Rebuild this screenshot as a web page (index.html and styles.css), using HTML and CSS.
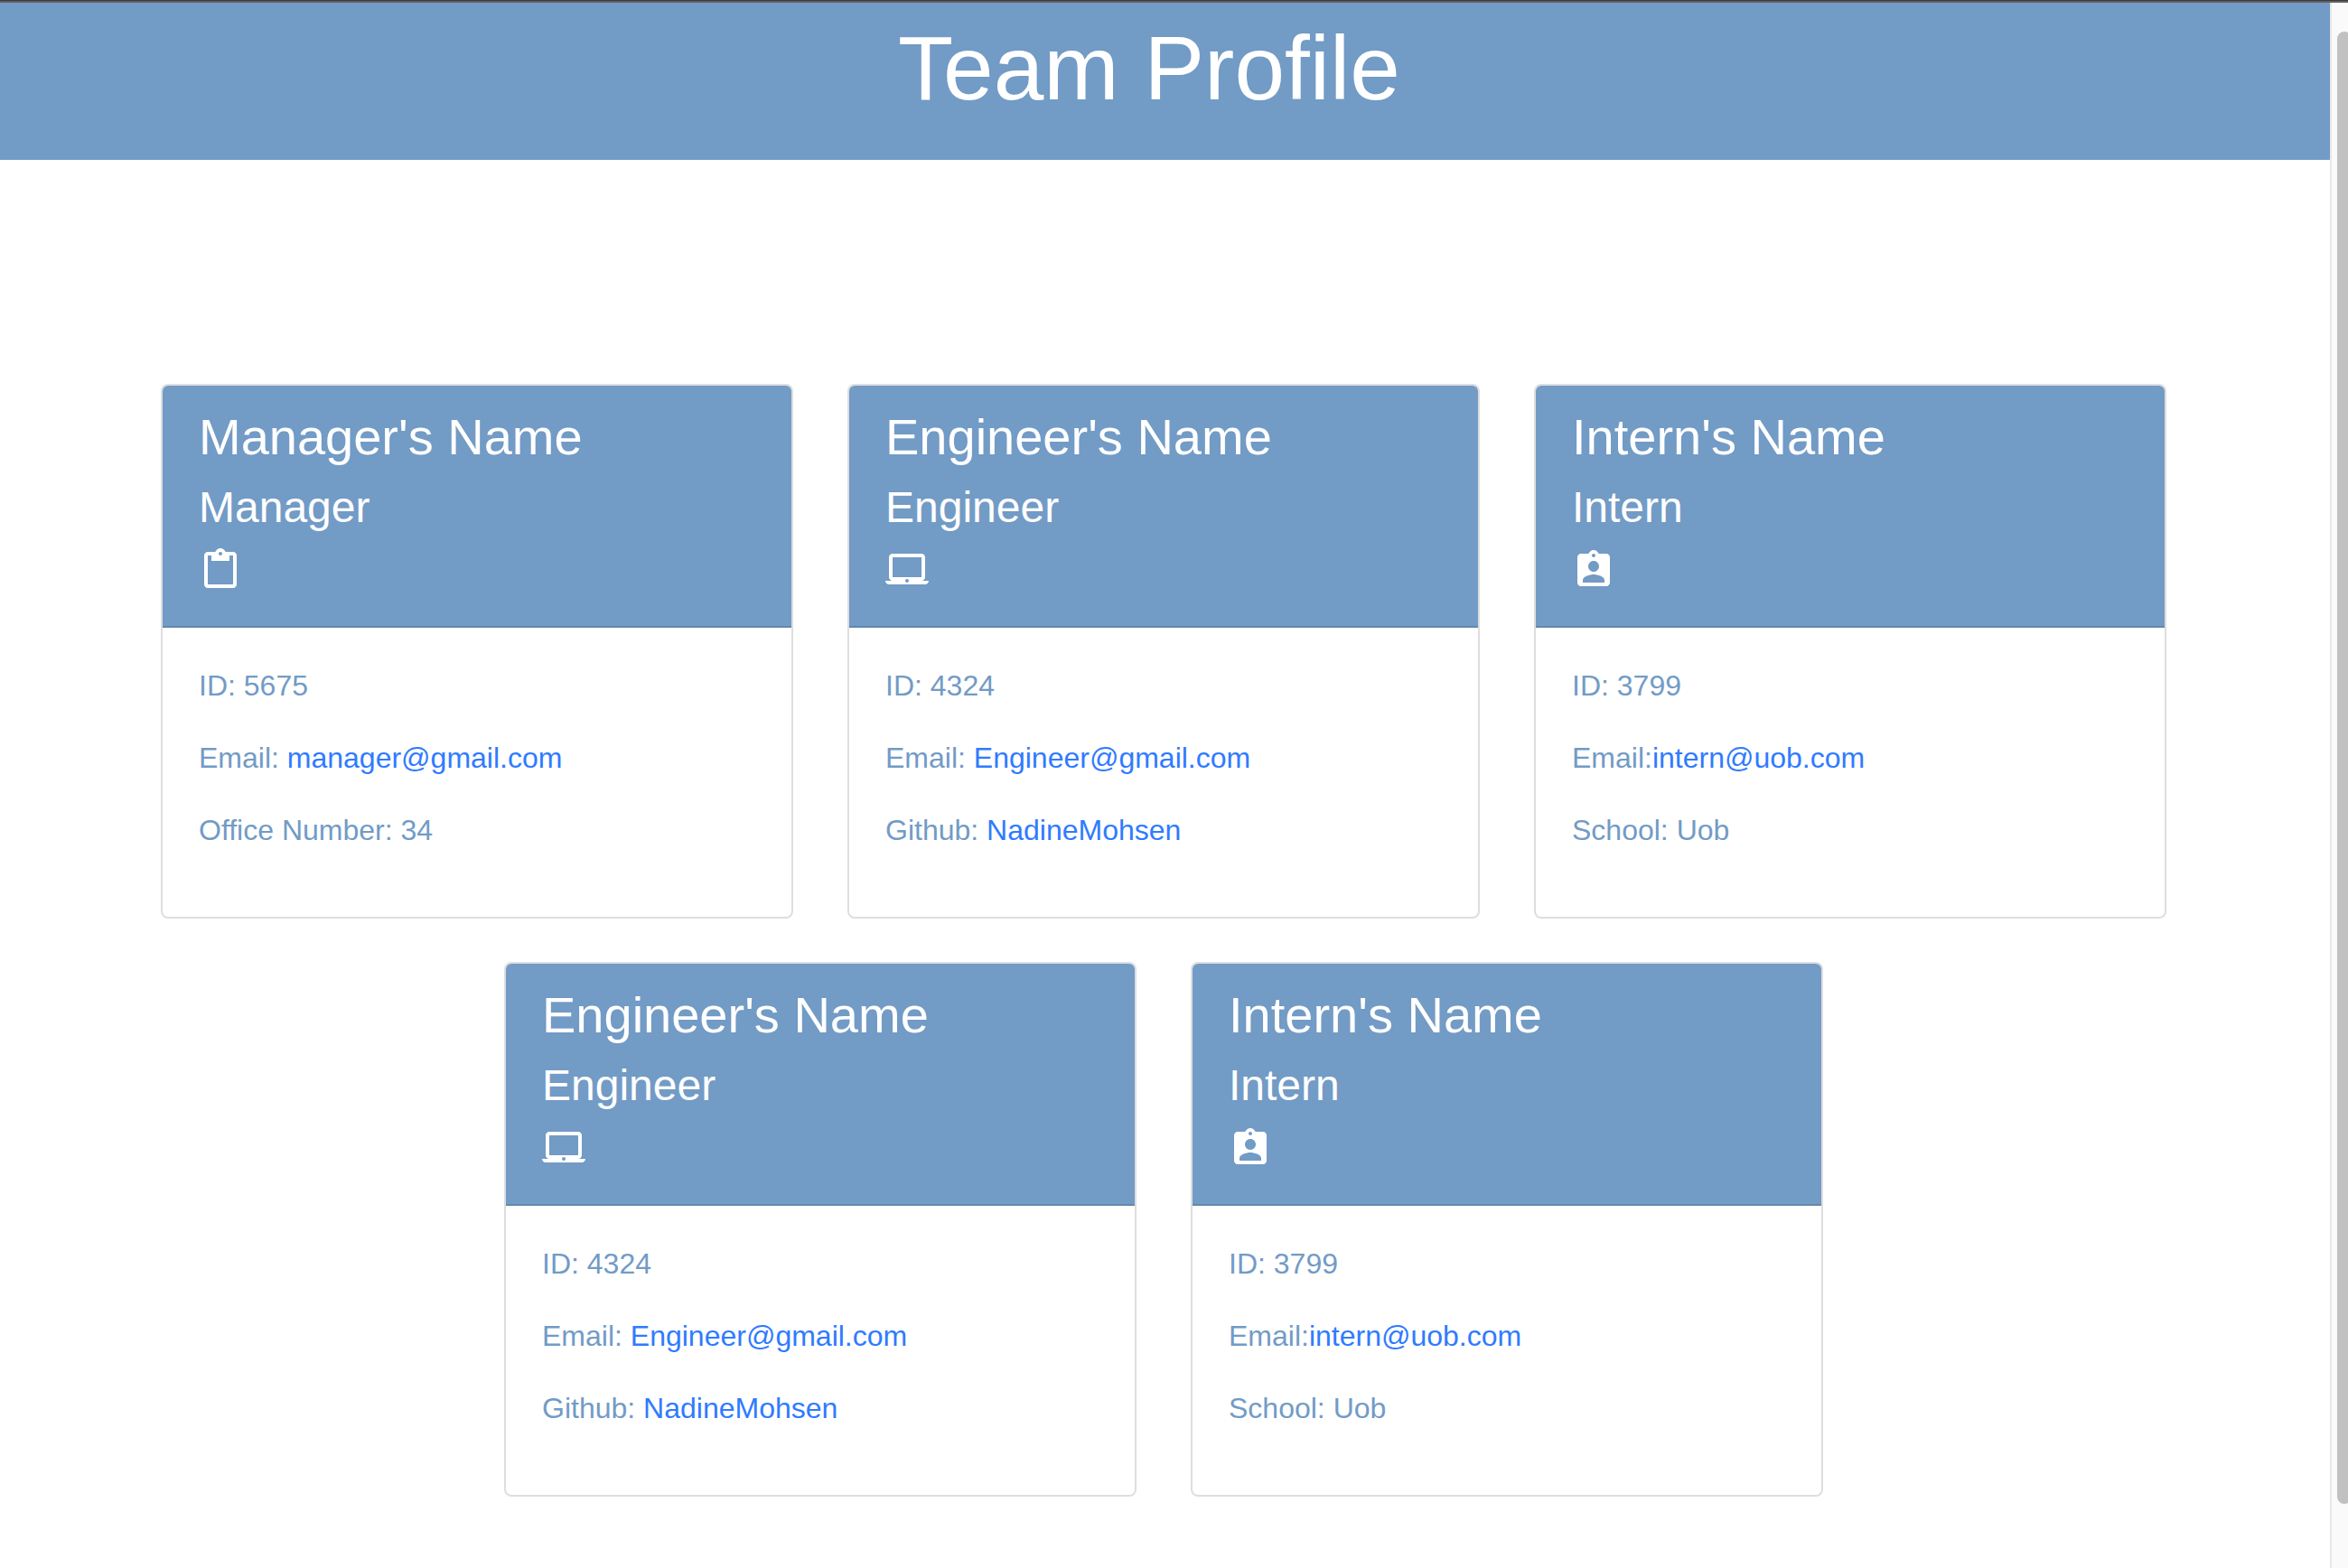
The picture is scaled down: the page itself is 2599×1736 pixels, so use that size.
FILE: index.html
```html
<!DOCTYPE html>
<html lang="en">
<head>
<meta charset="utf-8">
<meta name="viewport" content="width=device-width, initial-scale=1">
<title>Team Profile</title>
<link rel="stylesheet" href="styles.css">
</head>
<body>
<svg class="sprite" aria-hidden="true">
  <symbol id="icon-manager" viewBox="0 0 24 24"><path d="M19 2h-4.18C14.4.84 13.3 0 12 0c-1.3 0-2.4.84-2.82 2H5c-1.1 0-2 .9-2 2v16c0 1.1.9 2 2 2h14c1.1 0 2-.9 2-2V4c0-1.1-.9-2-2-2zm-7 0c.55 0 1 .45 1 1s-.45 1-1 1-1-.45-1-1 .45-1 1-1zm7 18H5V4h2v3h10V4h2v16z"/></symbol>
  <symbol id="icon-engineer" viewBox="0 0 24 24"><path d="M20 18c1.1 0 1.99-.9 1.99-2L22 5c0-1.1-.9-2-2-2H4c-1.1 0-2 .9-2 2v11c0 1.1.9 2 2 2H0c0 1.1.9 2 2 2h20c1.1 0 2-.9 2-2h-4zM4 5h16v11H4V5zm8 14c-.55 0-1-.45-1-1s.45-1 1-1 1 .45 1 1-.45 1-1 1z"/></symbol>
  <symbol id="icon-intern" viewBox="0 0 24 24"><path d="M19 3h-4.18C14.4 1.84 13.3 1 12 1c-1.3 0-2.4.84-2.82 2H5c-1.1 0-2 .9-2 2v14c0 1.1.9 2 2 2h14c1.1 0 2-.9 2-2V5c0-1.1-.9-2-2-2zm-7 0c.55 0 1 .45 1 1s-.45 1-1 1-1-.45-1-1 .45-1 1-1zm0 4c1.66 0 3 1.34 3 3s-1.34 3-3 3-3-1.34-3-3 1.34-3 3-3zm6 12H6v-1.4c0-2 4-3.1 6-3.1s6 1.1 6 3.1V19z"/></symbol>
</svg>
<div class="window">
  <div class="page">
    <header class="banner"><h1 class="banner-title">Team Profile</h1></header>
    <main class="team">
      <article class="card">
        <div class="card-header">
          <h2 class="name">Manager's Name</h2>
          <h3 class="role">Manager</h3>
          <svg class="icon" aria-hidden="true"><use href="#icon-manager"/></svg>
        </div>
        <div class="card-body">
          <p>ID: 5675</p>
          <p>Email: <a href="mailto:manager@gmail.com">manager@gmail.com</a></p>
          <p>Office Number: 34</p>
        </div>
      </article>
      <article class="card">
        <div class="card-header">
          <h2 class="name">Engineer's Name</h2>
          <h3 class="role">Engineer</h3>
          <svg class="icon" aria-hidden="true"><use href="#icon-engineer"/></svg>
        </div>
        <div class="card-body">
          <p>ID: 4324</p>
          <p>Email: <a href="mailto:Engineer@gmail.com">Engineer@gmail.com</a></p>
          <p>Github: <a href="https://github.com/NadineMohsen">NadineMohsen</a></p>
        </div>
      </article>
      <article class="card">
        <div class="card-header">
          <h2 class="name">Intern's Name</h2>
          <h3 class="role">Intern</h3>
          <svg class="icon" aria-hidden="true"><use href="#icon-intern"/></svg>
        </div>
        <div class="card-body">
          <p>ID: 3799</p>
          <p>Email:<a href="mailto:intern@uob.com">intern@uob.com</a></p>
          <p>School: Uob</p>
        </div>
      </article>
      <article class="card">
        <div class="card-header">
          <h2 class="name">Engineer's Name</h2>
          <h3 class="role">Engineer</h3>
          <svg class="icon" aria-hidden="true"><use href="#icon-engineer"/></svg>
        </div>
        <div class="card-body">
          <p>ID: 4324</p>
          <p>Email: <a href="mailto:Engineer@gmail.com">Engineer@gmail.com</a></p>
          <p>Github: <a href="https://github.com/NadineMohsen">NadineMohsen</a></p>
        </div>
      </article>
      <article class="card">
        <div class="card-header">
          <h2 class="name">Intern's Name</h2>
          <h3 class="role">Intern</h3>
          <svg class="icon" aria-hidden="true"><use href="#icon-intern"/></svg>
        </div>
        <div class="card-body">
          <p>ID: 3799</p>
          <p>Email:<a href="mailto:intern@uob.com">intern@uob.com</a></p>
          <p>School: Uob</p>
        </div>
      </article>
    </main>
  </div>
  <div class="scroll-track" aria-hidden="true"><div class="scroll-thumb"></div></div>
</div>
</body>
</html>
```
FILE: styles.css
```css
*,
*::before {
  box-sizing: border-box;
}

body,
h1,
h2,
h3,
p {
  margin: 0;
  font-weight: 400;
}

body {
  display: flex;
  flex-direction: column;
  min-height: 100vh;
  background: #fff;
  color: #729bc6;
  font: 32px/48px "Liberation Sans", Arial, sans-serif;
}

/* Window edge above the page */
body::before {
  content: "";
  height: 3px;
  border-top: 1px solid #3b3a3c;
  background: #656162;
}

.sprite {
  display: none;
}

.window {
  flex: 1;
  display: flex;
}

.page {
  flex: 1;
}

.banner {
  padding: 12px 35px 42px 0;
  background: #729bc6;
  color: #fff;
  text-align: center;
}

.banner-title {
  font-size: 100px;
  line-height: 120px;
}

.team {
  display: flex;
  flex-wrap: wrap;
  justify-content: center;
  gap: 48px 60px;
  padding: 248px 3px 48px 0;
}

.card {
  width: 700px;
  border: 2px solid #dedede;
  border-radius: 8px;
  overflow: hidden;
}

.card-header {
  display: flex;
  flex-direction: column;
  gap: 16px;
  padding: 23px 40px 38px;
  border-bottom: 2px solid #6388ad;
  background: #729bc6;
  color: #fff;
}

.name {
  font-size: 56px;
  line-height: 67px;
}

.role {
  font-size: 48px;
  line-height: 58px;
}

.icon {
  width: 48px;
  height: 48px;
  fill: currentColor;
}

.card-body {
  display: flex;
  flex-direction: column;
  gap: 32px;
  padding: 40px 40px 72px;
}

.card-body a {
  color: #2f7bff;
  text-decoration: none;
}

.scroll-track {
  width: 20px;
  padding: 32px 0 0 6px;
  border-left: 2px solid #e8e8e8;
  background: #fafafa;
  overflow: hidden;
}

.scroll-thumb {
  width: 16px;
  height: calc(94vh - 2px);
  border-radius: 8px;
  background: #c1c1c1;
}
```
